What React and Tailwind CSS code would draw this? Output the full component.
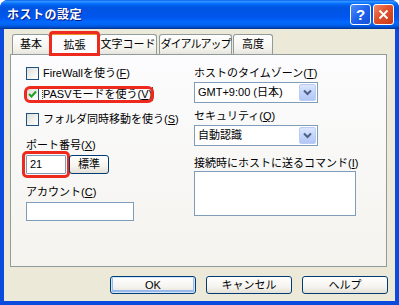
import React from "react";

const font = "font-['Liberation_Sans','Noto_Sans_CJK_JP',sans-serif]";

const Check = ({ checked }) => (
  <span className="w-[13px] h-[13px] shrink-0 border border-[#1c5180] bg-[linear-gradient(135deg,#dcdcd7_0%,#f6f6f4_70%,#ffffff_100%)] flex items-center justify-center">
    {checked && (
      <svg width="9" height="9" viewBox="0 0 9 9">
        <path d="M1 4 L3.5 6.5 L8 1.5" fill="none" stroke="#21a121" strokeWidth="2" />
      </svg>
    )}
  </span>
);

const CheckRow = ({ checked, children, className = "" }) => (
  <div className={`h-[13px] flex items-center gap-[4px] w-fit ${className}`}>
    <Check checked={checked} />
    <span className="text-[11px] leading-[13px] text-black whitespace-nowrap">{children}</span>
  </div>
);

const U = ({ children }) => <span className="underline underline-offset-[1px]">{children}</span>;

const Combo = ({ value }) => (
  <div className="h-[21px] w-[124px] border border-[#7f9db9] bg-white flex items-center justify-between pl-[3px] pr-[1px]">
    <span className="text-[11px] text-black whitespace-nowrap">{value}</span>
    <span className="w-[17px] h-[17px] rounded-[2px] border border-[#b9cdf7] bg-[linear-gradient(180deg,#dce6fd_0%,#c4d5fb_50%,#b3c7f6_100%)] flex items-center justify-center">
      <svg width="9" height="7" viewBox="0 0 9 7">
        <path d="M1 1.5 L4.5 5 L8 1.5" fill="none" stroke="#4d6185" strokeWidth="2" />
      </svg>
    </span>
  </div>
);

const XpButton = ({ children, def, className = "" }) => (
  <div
    className={`h-[18px] rounded-[3px] border border-[#003c74] bg-[linear-gradient(180deg,#ffffff_0%,#f5f4ef_60%,#e3e0d6_100%)] flex items-center justify-center text-[11px] text-black whitespace-nowrap ${
      def ? "shadow-[inset_0_0_0_1px_#cee7ff,inset_0_-1px_0_2px_#98b8ea]" : ""
    } ${className}`}
  >
    {children}
  </div>
);

const Tab = ({ children, w, active, className = "" }) =>
  active ? (
    <div
      className={`relative z-10 h-[23px] mb-[-1px] border border-b-0 border-[#919b9c] rounded-t-[3px] bg-[#fcfcfe] flex flex-col outline-[3px] outline-[#ee2a1e] outline-offset-[-2px] ${className}`}
      style={{ width: w }}
    >
      <div className="h-[3px] bg-[linear-gradient(180deg,#ffc83c,#e68b2c)] rounded-t-[2px] mx-[-1px] mt-[-1px]" />
      <div className="flex-1 flex items-center justify-center text-[11px] text-black whitespace-nowrap">{children}</div>
    </div>
  ) : (
    <div
      className={`h-[20px] border border-b-0 border-[#919b9c] rounded-t-[3px] bg-[linear-gradient(180deg,#ffffff_0%,#f4f3ee_70%,#e6e4dd_100%)] flex items-center justify-center text-[11px] text-black whitespace-nowrap ${className}`}
      style={{ width: w }}
    >
      {children}
    </div>
  );

export default function App() {
  return (
    <div className={`w-[399px] h-[305px] bg-white ${font}`}>
      <div className="w-full h-full rounded-t-[8px] bg-[#0a4bdd] flex flex-col overflow-hidden">
        {/* title bar */}
        <div className="h-[29px] shrink-0 flex items-center pl-[7px] pr-[5px] bg-[linear-gradient(180deg,#0058ee_0%,#3593ff_4%,#288eff_7%,#127dff_10%,#036ffc_13%,#0262ee_18%,#0057e5_24%,#0054e3_30%,#0055eb_56%,#005bf5_66%,#026afe_76%,#0062ef_86%,#0052d6_92%,#0040ab_97%,#003092_100%)]">
          <span className="text-white text-[12px] font-bold tracking-[0.5px] [text-shadow:1px_1px_0_#0a1883]">ホストの設定</span>
          <div className="ml-auto flex gap-[2px]">
            <div className="w-[21px] h-[21px] rounded-[3px] border border-white bg-[linear-gradient(135deg,#4f8cf7_0%,#1f63ee_50%,#1450d8_100%)] flex items-center justify-center text-white text-[15px] font-bold leading-none">?</div>
            <div className="w-[21px] h-[21px] rounded-[3px] border border-white bg-[linear-gradient(135deg,#ef8a68_0%,#e0502a_45%,#c8391a_100%)] flex items-center justify-center">
              <svg width="11" height="11" viewBox="0 0 11 11">
                <path d="M1.5 1.5 L9.5 9.5 M9.5 1.5 L1.5 9.5" stroke="white" strokeWidth="2" />
              </svg>
            </div>
          </div>
        </div>

        {/* client area */}
        <div className="flex-1 mx-[4px] mb-[4px] bg-[#ece9d8] flex flex-col pt-[2px] px-[6px]">
          {/* tabs */}
          <div className="h-[23px] flex items-end pl-[2px]">
            <Tab w={38}>基本</Tab>
            <Tab w={49} active>拡張</Tab>
            <Tab w={58}>文字コード</Tab>
            <Tab w={73} className="ml-[2px] tracking-[-1px]">ダイアルアップ</Tab>
            <Tab w={40} className="ml-[1px]">高度</Tab>
          </div>

          {/* panel */}
          <div className="w-[377px] h-[213px] border border-[#919b9c] bg-[linear-gradient(180deg,#fcfcfe_0%,#f4f3ee_100%)] flex pl-[15px]">
            <div className="w-[168px] flex flex-col pt-[12px]">
              <CheckRow>
                FireWallを使う(<U>F</U>)
              </CheckRow>
              <CheckRow checked className="mt-[8px] rounded-[4px] outline-[3px] outline-[#ee2a1e] outline-offset-[-1px]">
                <span className="outline-1 outline-dotted outline-[#444]">
                  PASVモードを使う(<U>V</U>)
                </span>
              </CheckRow>
              <CheckRow className="mt-[12px]">
                フォルダ同時移動を使う(<U>S</U>)
              </CheckRow>
              <div className="mt-[13px] h-[13px] text-[11px] leading-[13px]">
                ポート番号(<U>X</U>)
              </div>
              <div className="mt-[3px] flex items-center gap-[3px]">
                <div className="w-[40px] h-[19px] border border-[#7f9db9] bg-white text-[11px] pl-[3px] flex items-center rounded-[1px] outline-[3px] outline-[#ee2a1e] outline-offset-[1px]">
                  21
                </div>
                <XpButton className="w-[40px] h-[19px]">標準</XpButton>
              </div>
              <div className="mt-[12px] h-[13px] text-[11px] leading-[13px]">
                アカウント(<U>C</U>)
              </div>
              <div className="mt-[3px] w-[108px] h-[19px] border border-[#7f9db9] bg-white" />
            </div>

            <div className="flex flex-col pt-[12px]">
              <div className="h-[13px] text-[11px] leading-[13px]">
                ホストのタイムゾーン(<U>T</U>)
              </div>
              <div className="mt-[2px]">
                <Combo value="GMT+9:00 (日本)" />
              </div>
              <div className="mt-[7px] h-[13px] text-[11px] leading-[13px]">
                セキュリティ(<U>Q</U>)
              </div>
              <div className="mt-[2px]">
                <Combo value="自動認識" />
              </div>
              <div className="mt-[11px] h-[13px] text-[11px] leading-[13px]">
                接続時にホストに送るコマンド(<U>I</U>)
              </div>
              <div className="mt-[1px] w-[162px] h-[45px] border border-[#7f9db9] bg-white" />
            </div>
          </div>

          {/* buttons */}
          <div className="mt-[9px] flex justify-end gap-[10px] pr-[1px]">
            <XpButton def className="w-[86px]">OK</XpButton>
            <XpButton className="w-[86px]">キャンセル</XpButton>
            <XpButton className="w-[86px]">ヘルプ</XpButton>
          </div>
        </div>
      </div>
    </div>
  );
}
